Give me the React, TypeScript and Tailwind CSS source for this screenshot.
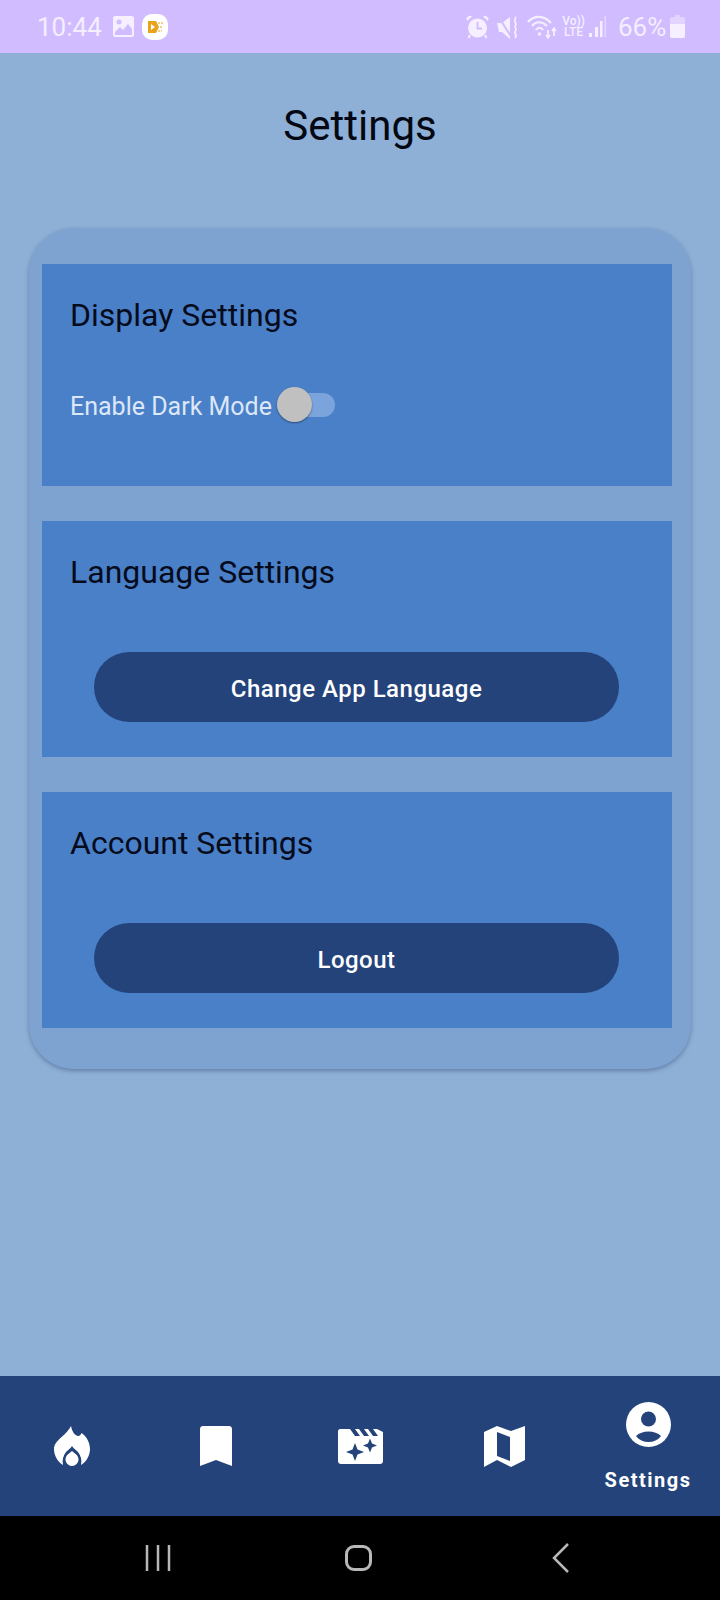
import React from "react";

const roboto = { fontFamily: "Roboto, sans-serif" };

function Flame() {
  return (
    <svg width="36" height="40" viewBox="0 0 36 40" fill="white" fillRule="evenodd">
      <path d="M17 0C18 5 20 9 24 10C26 10 27 8 27.5 7C32 10 36 16 36 23C36 30 32 36 27 39C28 34 27 30 24 26C22 24 19 22 18 20C17 22 14 24 12 26C9 30 8 34 9 39C4 36 0 30 0 23C0 14 11 11 17 0Z" />
      <path d="M18 25C20 27 24.500 29 24.500 33.500C24.500 37 21.500 40 18 40C14.500 40 11.500 37 11.500 33.500C11.500 29 16 27 18 25Z" />
    </svg>
  );
}

function Bookmark() {
  return (
    <svg width="32" height="40" viewBox="0 0 32 40" fill="white">
      <path d="M3 0H29C30.700 0 32 1.300 32 3V40L16 34L0 40V3C0 1.300 1.300 0 3 0Z" />
    </svg>
  );
}

function Movie() {
  return (
    <svg width="45" height="35" viewBox="0 0 45 35" fill="white">
      <path d="M2 0H39L45 3V32C45 33.700 43.700 35 42 35H3C1.300 35 0 33.700 0 32V2C0 1 1 0 2 0Z" />
      <path d="M12 0H17L22 7H17ZM21 0H26L31 7H26ZM30 0H35L40 7H35Z" fill="#23437a" />
      <path d="M17 14L19.500 20.500L26 23L19.500 25.500L17 32L14.500 25.500L8 23L14.500 20.500Z" fill="#23437a" />
      <path d="M32 9.500L34 14.500L39 16.500L34 18.500L32 23.500L30 18.500L25 16.500L30 14.500Z" fill="#23437a" />
    </svg>
  );
}

function MapIcon() {
  return (
    <svg width="41" height="41" viewBox="0 0 41 41" fill="white">
      <path d="M0 6L13 0L27 5L41 0V34L27 41L13 34L0 41Z" />
      <path d="M13 6L26 11V35L13 30Z" fill="#23437a" />
    </svg>
  );
}

function Account() {
  return (
    <svg width="45" height="45" viewBox="0 0 45 45" fill="white">
      <circle cx="22.500" cy="22.500" r="22.500" />
      <circle cx="22.500" cy="17" r="7.500" fill="#23437a" />
      <path d="M10 34C13 31 17.500 29.500 22.500 29.500C27.500 29.500 32 31 35 34C32 38 27.500 40 22.500 40C17.500 40 13 38 10 34Z" fill="#23437a" />
    </svg>
  );
}

function Section({ title, children, className }: { title: string; children: React.ReactNode; className?: string }) {
  return (
    <section className={`bg-[#4a80c8] pt-[33px] ${className ?? ""}`}>
      <h2 className="pl-[28px] text-[32px] leading-[36px] font-normal text-[#060b1c]">{title}</h2>
      {children}
    </section>
  );
}

function ActionButton({ label }: { label: string }) {
  return (
    <button className="mt-[62px] mb-[35px] ml-[52px] mr-[53px] flex h-[70px] w-[525px] items-center justify-center rounded-[35px] bg-[#23437a] pt-[3px] text-[24px] font-medium tracking-[0.5px] text-white">
      {label}
    </button>
  );
}

export default function App() {
  return (
    <div className="flex h-[1600px] w-[720px] flex-col overflow-hidden bg-[#8eafd6]" style={roboto}>
      <header className="flex h-[53px] items-center bg-[#d0bcff] text-[#f4eeff]">
        <span className="ml-[37px] w-[76px] text-[26px] leading-none font-normal">10:44</span>
        <svg width="21" height="21" viewBox="0 0 21 21" fill="#f5efff" fillRule="evenodd">
          <path d="M2 0H19C20 0 21 1 21 2V19C21 20 20 21 19 21H2C1 21 0 20 0 19V2C0 1 1 0 2 0ZM2 16V19H19V13L15 8L10 14L7 11Z" />
          <circle cx="6" cy="6" r="2.500" fill="#d0bcff" />
        </svg>
        <span className="ml-[8px] flex h-[26px] w-[26px] items-center justify-center rounded-[10px] bg-white">
          <svg width="16" height="14" viewBox="0 0 16 14">
            <path d="M1 1H9L12 7L9 13H1ZM4 4V10L8 7Z" fill="#e8a31c" fillRule="evenodd" />
            <path d="M11 3H16M13 7H16M11 11H15" stroke="#e8a31c" strokeWidth="1.200" strokeDasharray="2 1" />
          </svg>
        </span>
        <span className="ml-[298px]">
          <svg width="23" height="24" viewBox="0 0 23 24" fill="#f5efff">
            <circle cx="11.500" cy="13" r="9.500" />
            <path d="M1 6L6 1.500L3.500 0.500L0.500 3ZM22 6L17 1.500L19.500 0.500L22.500 3Z" />
            <path d="M11.500 7V13.500H16" stroke="#d0bcff" strokeWidth="1.800" fill="none" />
            <path d="M4 20L2.500 23M19 20L20.500 23" stroke="#f5efff" strokeWidth="2" />
          </svg>
        </span>
        <span className="ml-[8px]">
          <svg width="22" height="24" viewBox="0 0 22 24" fill="#f5efff">
            <path d="M0 8H5L13 2V24L5 17H2Z" />
            <path d="M1 1L15 23" stroke="#d0bcff" strokeWidth="2" />
            <path d="M18 2C20 4 16 6 18.500 8C20.500 10 16.500 11 18.500 13C20.500 15 16.500 17 18.500 19C19 20 19 22 18 23" stroke="#f5efff" strokeWidth="1.800" fill="none" />
          </svg>
        </span>
        <span className="ml-[8px]">
          <svg width="30" height="24" viewBox="0 0 30 24" fill="none" stroke="#f5efff" strokeWidth="2.200">
            <path d="M1 7C7 0 17 0 24 8" />
            <path d="M5 11C9 6 15 6 20 11" />
            <path d="M9 15C11 12 14 12 16 15" />
            <circle cx="12.500" cy="19" r="1.700" fill="#f5efff" stroke="none" />
            <path d="M21 15V23M27 13V21" strokeWidth="1.800" />
            <path d="M19 20L21 23L23 20M25 16L27 13L29 16" strokeWidth="1.500" />
          </svg>
        </span>
        <span className="ml-[5px] flex w-[23px] flex-col items-center text-[12px] leading-[11px] font-medium">
          <span>Vo))</span>
          <span>LTE</span>
        </span>
        <span className="ml-[3px]">
          <svg width="18" height="22" viewBox="0 0 18 22" fill="#f5efff">
            <rect x="1" y="17" width="3" height="4" />
            <rect x="7" y="11" width="3" height="10" />
            <rect x="12" y="5" width="2.500" height="16" />
            <rect x="16.500" y="0" width="1.500" height="21" opacity="0.5" />
          </svg>
        </span>
        <span className="ml-[12px] text-[26px] leading-none font-normal">66%</span>
        <svg className="ml-[4px]" width="15" height="23" viewBox="0 0 15 23">
          <path d="M5 0H10V2H13C14 2 15 3 15 4V21C15 22 14 23 13 23H2C1 23 0 22 0 21V4C0 3 1 2 2 2H5Z" fill="#e2d4ff" />
          <path d="M0 9H15V21C15 22 14 23 13 23H2C1 23 0 22 0 21Z" fill="#f5efff" />
        </svg>
      </header>

      <main className="flex-1">
        <h1 className="mt-[47px] text-center text-[42px] leading-[52px] font-normal text-[#030712]">Settings</h1>
        <div className="mx-[29px] mt-[76px] flex flex-col gap-[35px] rounded-[45px] bg-[#7fa3d1] pt-[36px] pr-[19px] pb-[41px] pl-[13px] shadow-[0_2px_4px_rgba(40,60,100,0.4)]">
          <Section title="Display Settings" className="h-[222px]">
            <div className="mt-[54px] flex h-[36px] items-center pl-[28px]">
              <span className="pt-[3px] text-[25px] text-[#dce7f7]">Enable Dark Mode</span>
              <span className="relative ml-[5px] h-[24px] w-[58px] rounded-full bg-[#7ba3dc]">
                <span className="absolute top-[-6px] left-0 h-[35px] w-[35px] rounded-full bg-[#c0c0c0] shadow-[0_1px_2px_rgba(0,0,0,0.4)]" />
              </span>
            </div>
          </Section>
          <Section title="Language Settings">
            <ActionButton label="Change App Language" />
          </Section>
          <Section title="Account Settings">
            <ActionButton label="Logout" />
          </Section>
        </div>
      </main>

      <nav className="flex h-[140px] items-center bg-[#23437a]">
        <div className="flex flex-1 justify-center"><Flame /></div>
        <div className="flex flex-1 justify-center"><Bookmark /></div>
        <div className="flex flex-1 justify-center"><Movie /></div>
        <div className="flex flex-1 justify-center"><MapIcon /></div>
        <div className="flex flex-1 flex-col items-center self-start pt-[26px]">
          <Account />
          <span className="mt-[21px] text-[20px] leading-[24px] font-bold tracking-[1.500px] text-white">Settings</span>
        </div>
      </nav>

      <footer className="flex h-[84px] items-center bg-black px-[58px] pb-[1px]">
        <div className="flex w-[200px] justify-center">
          <svg width="28" height="28" viewBox="0 0 28 28" stroke="#b8b8b8" strokeWidth="2.500"><path d="M3 1V27M14 1V27M25 1V27" /></svg>
        </div>
        <div className="flex w-[200px] justify-center">
          <span className="h-[26px] w-[27px] rounded-[9px] border-[3px] border-[#b8b8b8]" />
        </div>
        <div className="flex w-[200px] justify-center pl-[6px]">
          <svg width="18" height="30" viewBox="0 0 18 30" fill="none" stroke="#b8b8b8" strokeWidth="2.500"><path d="M16 1L2 15L16 29" /></svg>
        </div>
      </footer>
    </div>
  );
}
